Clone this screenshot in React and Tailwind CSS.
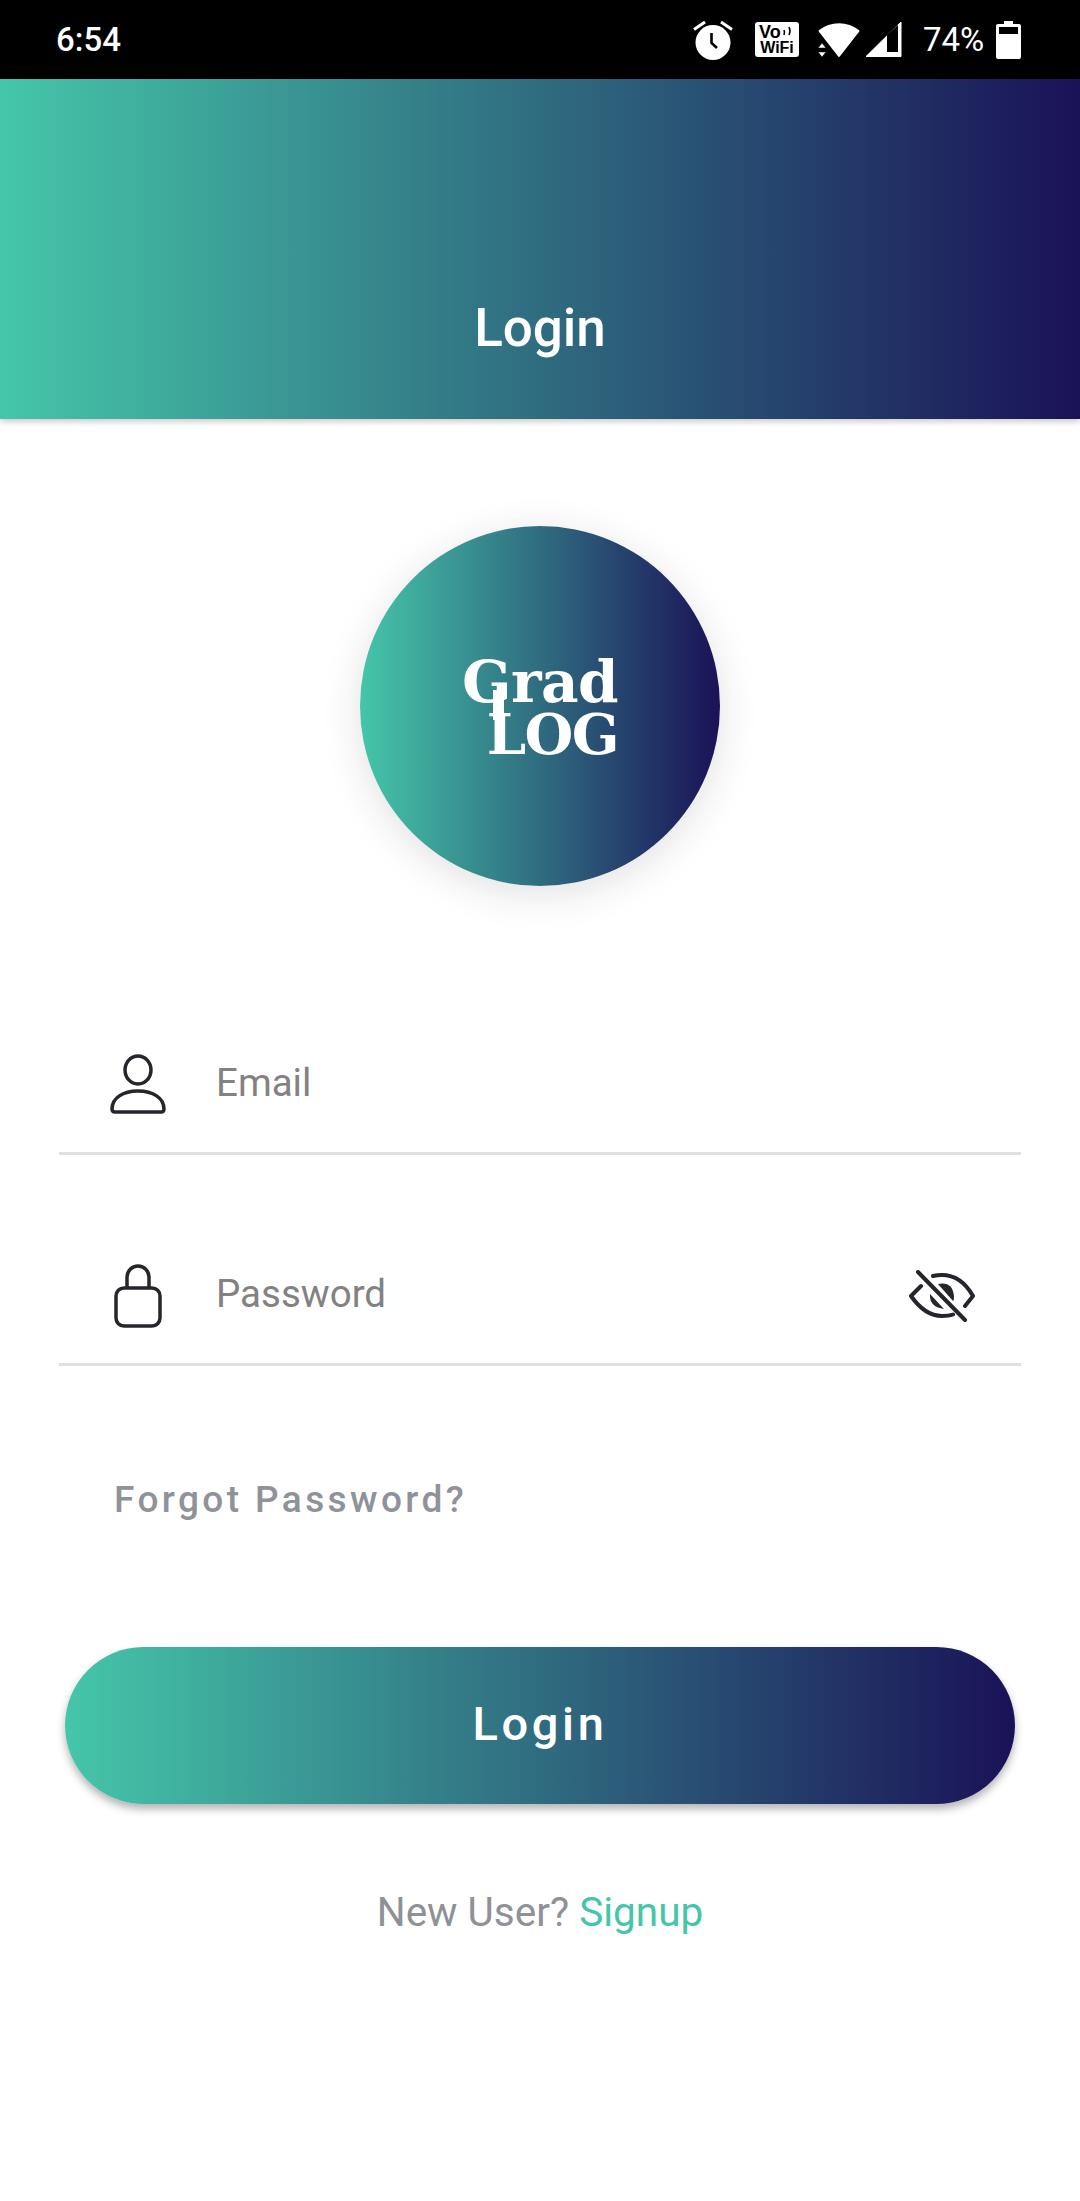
const brand = "bg-[linear-gradient(90deg,#45c6a9,#1a1257)]";

const StatusIcons = () => (
  <div className="flex items-center">
    {/* alarm */}
    <svg width="40" height="40" viewBox="0 0 40 40" className="mr-[22px]">
      <circle cx="20" cy="22.5" r="17.5" fill="#fff" />
      <path d="M1 9.5 12 2M39 9.5 28 2" stroke="#fff" strokeWidth="3" />
      <path d="M18.5 13v10l5.5 5" stroke="#000" strokeWidth="2.6" fill="none" />
    </svg>
    {/* vowifi */}
    <div className="relative mr-[19px] flex h-[35px] w-[44px] flex-col items-center justify-center rounded-[3px] bg-white font-['Liberation_Sans',sans-serif] font-bold text-black">
      <span className="w-full pl-[4px] text-[18px] leading-[17px]">Vo</span>
      <span className="text-[16px] leading-[14px]">WiFi</span>
      <svg width="12" height="12" viewBox="0 0 12 12" fill="none" stroke="#000" strokeWidth="1.6" className="absolute right-[5px] top-[4px]">
        <path d="M2 4q1 2 0 5M7 1q2 4 0 8" />
      </svg>
    </div>
    {/* wifi with arrows */}
    <svg width="42" height="36" viewBox="0 0 42 36" className="mr-[5px]">
      <path d="M1.5 9C13 0 29 0 40.500 9L21 34Z" fill="#fff" stroke="#fff" strokeWidth="2" strokeLinejoin="round" />
      <path d="M0 26h8l-4-5ZM0 30h8l-4 5Z" fill="#fff" stroke="#000" strokeWidth="0.5" />
    </svg>
    {/* signal */}
    <svg width="37" height="37" viewBox="0 0 37 37" className="mr-[21px]">
      <path d="M1 35.500 36 1V35.500Z" fill="#fff" stroke="#fff" strokeLinejoin="round" />
      <path d="M22 14 33 4V31H22Z" fill="#000" />
    </svg>
    <span className="mr-[12px] w-[61px] whitespace-nowrap text-[33px] font-normal leading-none text-white">74%</span>
    {/* battery */}
    <svg width="25" height="38" viewBox="0 0 25 38">
      <path d="M8 0h9v3h6a2 2 0 0 1 2 2v31a2 2 0 0 1-2 2H2a2 2 0 0 1-2-2V5a2 2 0 0 1 2-2h6Z" fill="#fff" />
      <rect x="3" y="6" width="19" height="7" fill="#000" />
    </svg>
  </div>
);

const Logo = () => (
  <div className="relative mt-[3px] flex flex-col items-end font-['DejaVu_Serif',serif] font-bold text-white">
    <span className="text-[58px] leading-[48px] tracking-[-0.5px]">Grad</span>
    <span className="mt-[5px] text-[56px] leading-[46px] tracking-[-1.5px]">LOG</span>
    {/* the L's stem runs up into the G */}
    <div className="absolute left-[31px] top-[32px] h-[30px] w-[11px] bg-white" />
  </div>
);

const UserIcon = () => (
  <svg width="58" height="62" viewBox="0 0 58 62" fill="none" stroke="#24262b" strokeWidth="3.5" strokeLinejoin="round">
    <ellipse cx="29" cy="18" rx="13" ry="14" />
    <path d="M3 57C3 46 14 39 29 39S55 46 55 57Q55 60 52 60H6Q3 60 3 57Z" />
  </svg>
);

const LockIcon = () => (
  <svg width="48" height="64" viewBox="0 0 48 64" fill="none" stroke="#24262b" strokeWidth="3.5" className="mt-[3px]">
    <rect x="2" y="24" width="44" height="38" rx="8" />
    <path d="M13 24V13a11 11 0 0 1 22 0V24" />
  </svg>
);

const EyeOffIcon = () => (
  <svg width="66" height="54" viewBox="0 0 66 54" fill="none" stroke="#24262b" strokeWidth="4" strokeLinecap="round" strokeLinejoin="round" className="mt-[5px]">
    <path d="M9 2 56 50" />
    <path d="M12 16 2 26Q16 46 33 46q7 0 11-1.5" />
    <path d="M24 6q4-1 9-1 19 0 31 21l-8 10" />
    <path d="M21 24Q20 37 35 39Z" fill="#24262b" stroke="none" />
    <path d="M29 14Q44 11 45 27Q45 30 44 31Z" fill="#24262b" stroke="none" />
  </svg>
);

const Field = ({ icon, label, right }) => (
  <div className="mx-[59px] flex h-[112px] items-center border-b-[3px] border-[#e0e0e0] pb-[29px]">
    <div className="flex w-[157px] justify-center">{icon}</div>
    <span className="text-[38.500px] leading-none text-[#828282]">{label}</span>
    {right && <div className="ml-auto mr-[46px]">{right}</div>}
  </div>
);

export default function App() {
  return (
    <div className="flex h-[2201px] w-[1080px] flex-col overflow-hidden bg-white font-['Roboto',sans-serif]">
      <div className="flex h-[79px] items-center justify-between bg-black pl-[56px] pr-[59px]">
        <span className="text-[33px] font-medium leading-none text-white">6:54</span>
        <StatusIcons />
      </div>

      <header className={`flex h-[340px] items-end justify-center pb-[64px] shadow-[0_3px_6px_rgba(0,0,0,0.2)] ${brand}`}>
        <h1 className="text-[53px] font-medium leading-none text-white">Login</h1>
      </header>

      <div className={`mx-auto mt-[107px] flex h-[360px] w-[360px] items-center justify-center rounded-full shadow-[0_8px_40px_rgba(0,0,0,0.12)] ${brand}`}>
        <Logo />
      </div>

      <div className="mt-[157px]">
        <Field icon={<UserIcon />} label="Email" />
      </div>
      <div className="mt-[99px]">
        <Field icon={<LockIcon />} label="Password" right={<EyeOffIcon />} />
      </div>

      <a className="ml-[114px] mt-[115px] text-[37px] font-medium leading-none tracking-[3.4px] text-[#8f9299]">Forgot Password?</a>

      <button className={`mx-[65px] mt-[129px] h-[157px] rounded-full pb-[2px] text-[47px] font-medium tracking-[3.6px] text-white shadow-[0_5px_8px_rgba(0,0,0,0.3)] ${brand}`}>
        Login
      </button>

      <p className="mt-[88px] text-center text-[40.500px] leading-none text-[#8e9196]">
        New User? <span className="text-[#45c6a9]">Signup</span>
      </p>
    </div>
  );
}
